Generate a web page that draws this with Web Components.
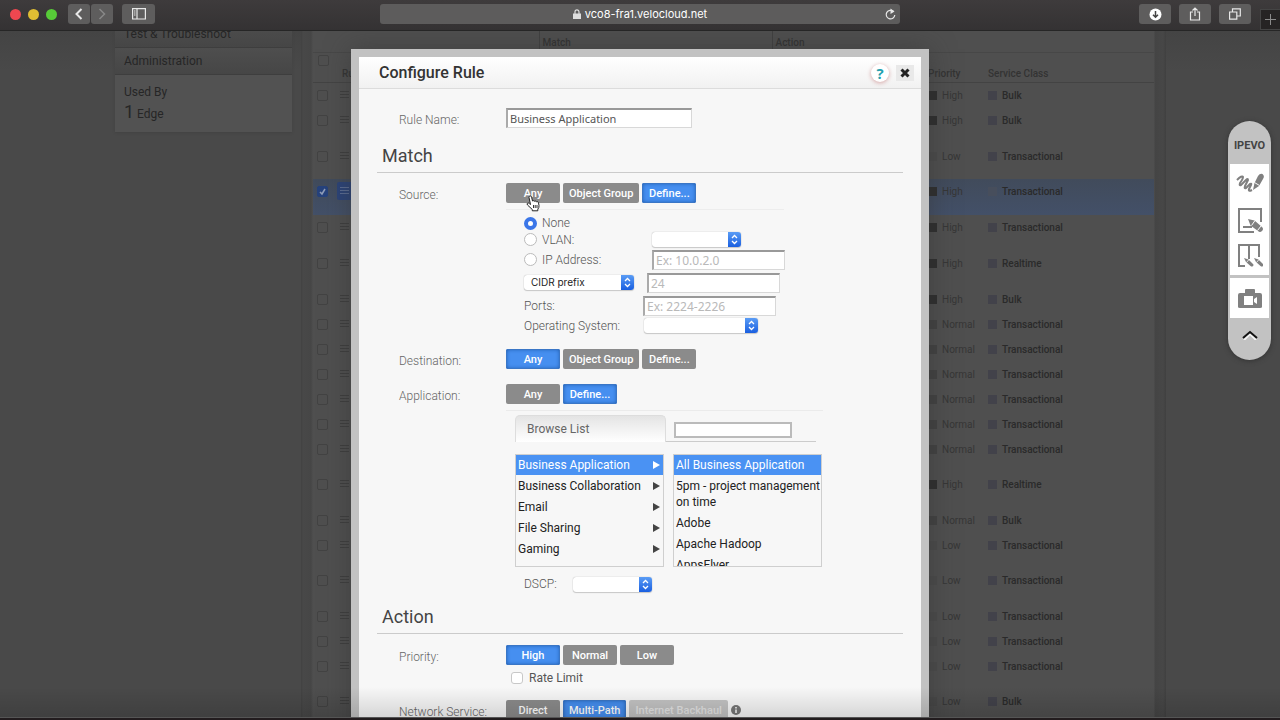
<!DOCTYPE html>
<html lang="en">
<head>
<meta charset="utf-8">
<title>Configure Rule</title>
<style>
html,body{margin:0;height:100%;overflow:hidden;background:#484848;font-family:Roboto,"Liberation Sans",sans-serif}
</style>
</head>
<body>
<app-shell></app-shell>

<template id="t-app-shell">
<style>
:host{display:flex;flex-direction:column;height:100vh;background:#484848}
.stage{flex:1;min-height:0;position:relative;overflow:hidden;background:linear-gradient(#444,#494949 40px)}
.page{max-width:1052px;margin:0 auto;display:flex;align-items:flex-start;gap:9px}
nav-sidebar{flex:0 0 177px;margin-left:1px}
rules-table{flex:1;min-width:0}
.layer{position:absolute;inset:0;display:flex;justify-content:center;align-items:flex-start;padding-top:18px}
.layer::after{content:"";position:absolute;left:0;right:0;bottom:0;height:30px;background:linear-gradient(transparent,#0002);pointer-events:none}
tool-dock{position:absolute;right:9px;top:90px}
.edge{height:3px;background:#221c1e;border-top:1px solid #555;box-sizing:border-box}
</style>
<browser-bar></browser-bar>
<main class="stage">
<div class="page"><nav-sidebar></nav-sidebar><rules-table></rules-table></div>
<div class="layer"><config-dialog></config-dialog></div>
<tool-dock></tool-dock>
</main>
<div class="edge"></div>
</template>

<template id="t-browser-bar">
<style>
:host{display:flex;align-items:flex-start;justify-content:space-between;height:30px;border-bottom:1px solid #262626;background:linear-gradient(#3e3b3c,#343233);position:relative}
.side{display:flex;align-items:flex-start;flex:1}
.right{justify-content:flex-end}
.lights{display:flex;gap:7px;padding:9px 11px 0 10px}
.lights i{width:11px;height:11px;border-radius:50%;background:#ee4750}
.lights i:nth-child(2){background:#dfbd33}.lights i:nth-child(3){background:#57cb38}
button{border:0;padding:0;margin:4px 0 0;height:20px;width:32px;border-radius:3px;background:#5e5d5d;display:grid;place-items:center}
.back,.fwd{width:22px}.fwd{margin-left:1px}.panel{width:33px;margin-left:9px}
.right button{margin-left:8px}
.right button.new{margin:9px 0 0 9px;width:20px;height:21px;background:#262424;border:1px solid #444;border-right:0;border-radius:0;box-sizing:border-box}
.url{margin-top:4px;width:520px;height:20px;border-radius:3px;background:#5d5c5c;display:grid;grid-template-columns:20px 1fr 20px;align-items:center;color:#fff;font:400 11px/20px Inter,Roboto,sans-serif}
.addr{display:flex;justify-content:center;align-items:center;gap:4px}
.url button{margin:0;width:20px;background:none}
svg{display:block;fill:none;stroke:#e8e8e8}
</style>
<div class="side">
<div class="lights"><i></i><i></i><i></i></div>
<button class="back" aria-label="Back"><svg width="8" height="12" stroke-width="2"><path d="M6.500 1 1.500 6l5 5"/></svg></button>
<button class="fwd" aria-label="Forward"><svg width="8" height="12" stroke-width="1.500" style="stroke:#888"><path d="m1.500 1 5 5-5 5"/></svg></button>
<button class="panel" aria-label="Sidebar"><svg width="14" height="12" stroke-width="1.200"><path d="M.6.6h12.800v10.400H.6zM5 .6V11"/><path stroke-width="1" d="M2 3h1.500M2 5h1.500M2 7h1.500"/></svg></button>
</div>
<div class="url"><span></span><span class="addr"><svg width="8" height="10"><path fill="#ddd" stroke="none" d="M0 4.500h8V10H0z"/><path stroke="#ddd" stroke-width="1.200" d="M2 5V3a2 2.200 0 0 1 4 0v2"/></svg>vco8-fra1.velocloud.net</span>
<button aria-label="Reload"><svg width="11" height="12" stroke-width="1.200"><path d="M8.500 3.500A4.300 4.300 0 1 0 9.800 7"/><path fill="#e8e8e8" stroke="none" d="m5.500.5 4 3-4 2.500z"/></svg></button></div>
<div class="side right">
<button aria-label="Downloads"><svg width="13" height="13"><circle cx="6.500" cy="6.500" r="6" fill="#fff" stroke="none"/><path stroke="#444" stroke-width="1.500" d="M6.500 3v6M4 6.700l2.500 2.500L9 6.700"/></svg></button>
<button aria-label="Share"><svg width="12" height="14" stroke-width="1.200"><path d="M4 5H1.500v8h9V5H8M6 9V1M3.500 3.500 6 1l2.500 2.500"/></svg></button>
<button aria-label="Tabs"><svg width="12" height="12" stroke-width="1.200"><path d="M.6 4h7.200v7.200H.6zM3.500 4V.8h7.800V8H8"/></svg></button>
<button class="new" aria-label="New tab"><svg width="11" height="11" style="stroke:#8a8a8a"><path d="M5.500 0v11M0 5.500h11"/></svg></button>
</div>
</template>

<template id="t-nav-sidebar">
<style>
:host{display:block;background:#525252;color:#262626;font-size:12px;height:101px;overflow:hidden;box-shadow:0 1px 2px #424242}
a{display:block;box-sizing:border-box;height:27px;line-height:26px;padding-left:9px;color:inherit;text-decoration:none;background:linear-gradient(#4e4e4e,#464646);border-bottom:1px solid #3e3e3e}
a:first-of-type{margin-top:-10px}
.used{padding:7px 9px;line-height:20px}
p{margin:0}b{font-size:18px;font-weight:400}
</style>
<a href="#test">Test &amp; Troubleshoot</a><a href="#admin">Administration</a>
<div class="used"><p>Used By</p><p><b>1</b> Edge</p></div>
</template>

<template id="t-rules-table">
<style>
:host{display:block;box-sizing:border-box;height:700px;padding:0 12px;background:linear-gradient(90deg,#414141,#484848 2px,#464646 10px,#4f4f4f 12px,#4f4f4f calc(100% - 12px),#444 calc(100% - 11px),#474747 calc(100% - 3px),#404040)}
table{width:100%;table-layout:fixed;border-collapse:collapse;font-size:10px;color:#2a2a2a}
th{font-weight:500;text-align:left;padding:0;color:#333;box-sizing:border-box}
thead tr:first-child{height:21px}
thead tr:first-child th{border-right:1px solid #414141;border-bottom:1px solid #474747;padding:4px 0 0 3px;line-height:14px}
thead tr:first-child th:last-child{border-right:0}
thead tr:last-child{height:30px}
thead tr:last-child th{border-bottom:1px solid #434343;vertical-align:bottom;line-height:16px}
td{padding:0;vertical-align:top;height:var(--h);line-height:25px;white-space:nowrap;overflow:hidden;font-weight:500}
td.p{color:#363636;font-weight:400}
tr.sel{background:linear-gradient(#414b5b,#435068)}
input{appearance:none;width:11px;height:11px;border:1px solid #434343;border-radius:2px;margin:7px 0 0 4px;display:block}
.sel input{background:#26427c url("data:image/svg+xml,%3Csvg xmlns='http://www.w3.org/2000/svg' width='9' height='9'%3E%3Cpath d='m2 5 2 2 3-5' fill='none' stroke='%23909db8' stroke-width='1.500'/%3E%3C/svg%3E");border-color:#26427c}
th input{margin:0 0 16px 5px}
.n{display:inline-block;padding-left:3px}
.n svg{display:block;margin-top:7px;stroke:#3e3e3e}
.sel .n{background:#2b4378;padding:0 18px 5px 3px;margin-top:3px;border-radius:2px;line-height:0}
.sel .n svg{stroke:#5b6d94;margin-top:4px}
.sw{display:inline-block;width:9px;height:9px;margin-right:5px;vertical-align:-1px;background:#42424a}
.High{background:#2e2e2e}.Normal{background:#424242}.Low{background:#4b4b4b}
.sel .sw:not(.High){background:#474e5c}
</style>
<table><colgroup><col style="width:24px"><col style="width:202px"><col style="width:233px"><col style="width:156px"><col style="width:60px"><col></colgroup>
<thead><tr><th colspan="2"></th><th>Match</th><th colspan="3">Action</th></tr>
<tr><th><input type="checkbox" aria-label="Select all rules"></th><th style="padding-left:5px">Rule</th><th></th><th></th><th>Priority</th><th>Service Class</th></tr></thead>
<tbody></tbody></table>
</template>

<template id="t-form-row">
<style>
:host{display:grid;grid-template-columns:107px 1fr;align-items:start;padding-left:22px}
.l{font-size:12px;line-height:24px;color:#666;font-weight:300}
</style>
<div class="l"><slot name="label"></slot></div><div><slot></slot></div>
</template>

<template id="t-seg-button">
<style>
:host{display:inline-flex}
button{border:0;margin:0;box-sizing:border-box;min-width:54px;height:20px;padding:1px 6px 0;border-radius:2px;background:#8b8b8b;color:#fff;font:500 11px/18px Roboto,sans-serif}
:host([on]) button{background:#468ff0;box-shadow:inset 0 0 4px #174f9c;outline:1px solid #3a76c6;outline-offset:-1px}
:host([off]) button{background:#c3c3c3;color:#e4e4e4}
</style>
<button type="button"><slot></slot></button>
</template>

<template id="t-mac-select">
<style>
:host{display:inline-block;position:relative;height:15px;background:#fff;border-radius:3px;box-shadow:0 0 1px #999,0 1px 1px #ccc}
::slotted(select){appearance:none;display:block;width:100%;height:15px;border:0;margin:0;padding:0 16px 0 7px;background:none;font:10px/15px Inter,sans-serif;color:#222}
svg{position:absolute;right:0;top:0;pointer-events:none}
</style>
<slot></slot><svg width="13" height="15"><defs><linearGradient id="g" x2="0" y2="1"><stop stop-color="#5a9cf5"/><stop offset="1" stop-color="#1a5fe0"/></linearGradient></defs><path fill="url(#g)" d="M0 0h10a3 3 0 0 1 3 3v9a3 3 0 0 1-3 3H0z"/><path fill="none" stroke="#fff" stroke-width="1.300" d="m4 6 2.500-2.500L9 6M4 9l2.500 2.500L9 9"/></svg>
</template>

<template id="t-pick-list">
<style>
:host{display:block;box-sizing:border-box;width:149px;height:113px;overflow:hidden;border:1px solid #cfcfcf;font-size:12px;color:#222}
::slotted(button){display:block;box-sizing:border-box;width:100%;border:0;margin:0;padding:3px 0 2px 2px;background:none;text-align:left;font:12px/16px Roboto,sans-serif;color:#222}
::slotted(button[aria-current]){background:#4a92f3;color:#fff;padding:2px 0 2px 2px}
</style><slot></slot>
</template>

<template id="t-config-dialog">
<style>
:host{display:block;box-sizing:border-box;width:578px;height:800px;border:8px solid #c2c2c2;background:#f7f7f7;color:#555;box-shadow:0 0 24px #3338}
header{display:flex;align-items:center;gap:7px;height:31px;padding:0 7px 0 20px;border-bottom:1px solid #dcdcdc;background:linear-gradient(#fff,#f1f1f1)}
h1{flex:1;margin:0;font:500 16px/33px Roboto,sans-serif;color:#333}
header button{border:0;padding:0;width:18px;height:16px;background:#e9e9e9;display:grid;place-items:center}
header button.help{width:18px;height:18px;border-radius:50%;background:#fff;color:#25a0ae;font:700 15px/18px "Open Sans",sans-serif;box-shadow:0 1px 4px #d6a5a5}
form{padding:19px 18px 0}
h2{margin:0;height:32px;border-bottom:1px solid #cbcbcb;padding-left:5px;font:400 18px/30px Roboto,sans-serif;color:#444;box-sizing:border-box}
.segs{display:flex;gap:3px;align-items:center}
input[type=text]{box-sizing:border-box;height:20px;border:1px solid #d8d8d8;border-top:2px solid #999;border-left:2px solid #aaa;background:#fff;padding:0 2px;margin:0;font:12px/16px "Noto Sans",sans-serif;color:#555}
#name{font-size:11px}
input::placeholder{color:#b9b9b9}
input[type=radio]{appearance:none;width:13px;height:13px;margin:0 5px 0 0;border:1px solid #bbb;border-radius:50%;background:#fff}
input[type=radio]:checked{border:4px solid #3b76e8}
input[type=checkbox]{appearance:none;width:12px;height:12px;margin:0 6px 0 0;border:1px solid #c8c8c8;border-radius:3px;background:#fff}
.r{display:flex;align-items:center;font-weight:300;font-size:12px}
.r label{display:flex;align-items:center}
.src{margin-top:6px;border-top:1px solid #ededed;width:278px;padding:5px 0 0 18px;box-sizing:border-box}
.src>.r>:first-child{flex:0 0 auto}
.app{margin-top:6px;border-top:1px solid #ebebeb;width:317px;padding:4px 0 0 9px;box-sizing:border-box}
.tabs{display:flex;height:27px;align-items:stretch;margin-right:7px}
.tab{width:151px;border:1px solid #ddd;border-bottom:0;border-radius:5px 5px 0 0;background:linear-gradient(#e4e4e4,#fff);text-align:left;padding:0 11px;font:12px/26px Roboto,sans-serif;color:#666;box-sizing:border-box}
.find{flex:1;border-bottom:1px solid #ccc;padding:7px 0 0 8px}
.find input[type=text]{display:block;width:118px;height:16px;border:2px solid #bbb}
.lists{display:flex;gap:9px;margin-top:12px}
pick-list i{float:right;width:0;height:0;border:4px solid transparent;border-left:7px solid #444;border-right:0;margin:4px 3px 0 0}
pick-list [aria-current] i{border-left-color:#fff}
.any{position:relative;display:inline-flex}
.any svg{position:absolute;left:20px;top:12px;pointer-events:none}
</style>
<header><h1>Configure Rule</h1><button class="help" aria-label="Help">?</button><button aria-label="Close"><svg width="10" height="10"><path d="m1.500 1.500 7 7m0-7-7 7" stroke="#222" stroke-width="3"/></svg></button></header>
<form>
<form-row style="height:33px"><label slot="label" for="name">Rule Name:</label><input type="text" id="name" value="Business Application" style="width:186px"></form-row>
<h2>Match</h2>
<form-row style="height:166px;padding-top:10px"><span slot="label">Source:</span>
<div class="segs"><span class="any"><seg-button>Any</seg-button><svg width="14" height="17" viewBox="0 0 14 17"><path fill="#fff" stroke="#222" stroke-width="1" stroke-linejoin="round" d="M4.500 9.500 3 2.500Q2.800.8 4.200.8q1 0 1.400 1.400L6.500 6q1.300-.8 2.200.3 1.300-.7 2 .5 1.300-.5 1.800.8l.5 3q.2 2-1.200 3.600v1.600H6.300v-1.300L1.500 10q-1-1.300.2-1.900 1-.4 2 .8z"/><path stroke="#333" d="M7.500 10v3M9.200 10v3M11 10v3"/></svg></span><seg-button>Object Group</seg-button><seg-button on>Define...</seg-button></div>
<div class="src">
<div class="r" style="height:16px"><label><input type="radio" name="s" checked>None</label></div>
<div class="r" style="height:17px"><label style="width:128px" for="vlan"><input type="radio" name="s" aria-label="VLAN">VLAN:</label><mac-select style="width:89px"><select id="vlan"><option></option></select></mac-select></div>
<div class="r" style="height:23px"><label style="width:128px" for="ip"><input type="radio" name="s" aria-label="IP Address">IP Address:</label><input type="text" id="ip" placeholder="Ex: 10.0.2.0" style="width:133px"></div>
<div class="r" style="height:23px"><mac-select style="width:110px;margin-right:13px"><select aria-label="Mask type"><option>CIDR prefix</option></select></mac-select><input type="text" aria-label="Prefix" placeholder="24" style="width:133px"></div>
<div class="r" style="height:23px"><label for="ports" style="width:119px">Ports:</label><input type="text" id="ports" placeholder="Ex: 2224-2226" style="width:133px"></div>
<div class="r" style="height:17px"><label for="os" style="width:120px">Operating System:</label><mac-select style="width:114px"><select id="os"><option></option></select></mac-select></div>
</div></form-row>
<form-row style="height:35px"><span slot="label">Destination:</span><div class="segs"><seg-button on>Any</seg-button><seg-button>Object Group</seg-button><seg-button>Define...</seg-button></div></form-row>
<form-row style="height:218px"><span slot="label">Application:</span><div class="segs"><seg-button>Any</seg-button><seg-button on>Define...</seg-button></div>
<div class="app">
<div class="tabs"><button type="button" class="tab">Browse List</button><div class="find"><input type="text" aria-label="Search applications"></div></div>
<div class="lists">
<pick-list><button type="button" aria-current="true"><i></i>Business Application</button><button type="button"><i></i>Business Collaboration</button><button type="button"><i></i>Email</button><button type="button"><i></i>File Sharing</button><button type="button"><i></i>Gaming</button></pick-list>
<pick-list><button type="button" aria-current="true">All Business Application</button><button type="button">5pm - project management on time</button><button type="button">Adobe</button><button type="button">Apache Hadoop</button><button type="button">AppsFlyer</button></pick-list>
</div>
<div class="r" style="height:34px;padding-left:9px"><label for="dscp" style="width:49px">DSCP:</label><mac-select style="width:79px"><select id="dscp"><option></option></select></mac-select></div>
</div></form-row>
<h2>Action</h2>
<form-row style="height:55px;padding-top:11px"><span slot="label">Priority:</span><div class="segs"><seg-button on>High</seg-button><seg-button>Normal</seg-button><seg-button>Low</seg-button></div>
<div class="r" style="height:26px;padding-left:5px;font-weight:400"><label><input type="checkbox">Rate Limit</label></div></form-row>
<form-row><span slot="label">Network Service:</span><div class="segs"><seg-button>Direct</seg-button><seg-button on>Multi-Path</seg-button><seg-button off>Internet Backhaul</seg-button><svg width="10" height="10"><circle cx="5" cy="5" r="5" fill="#777"/><path stroke="#fff" stroke-width="1.500" d="M5 2v1.500M5 4.500V8"/></svg></div></form-row>
</form>
</template>

<template id="t-tool-dock">
<style>
:host{display:block;box-sizing:border-box;width:43px;padding:0 2px;border-radius:22px;background:#c2c2c2;box-shadow:0 1px 5px #333}
.brand{height:43px;line-height:50px;text-align:center;font-weight:700;font-size:11px;color:#444}
button{display:grid;place-items:center;width:100%;height:36px;border:0;padding:0;margin:0;background:#fff}
button.cam{height:40px;margin-top:3px}
button.up{height:42px;background:none;padding-bottom:8px}
.set{background:#fff;padding:2px 0 1px}
svg{display:block;fill:none;stroke:#808080}
</style>
<div class="brand">IPEVO</div>
<div class="set">
<button aria-label="Annotate"><svg width="28" height="22"><path stroke-width="2" stroke-linejoin="round" d="M1 7q5-5 6-3 0 2-3 6-1 3 1 2l5-5q2-2 2 0l-3 6q-1 3 1 2l4-4q2-1 1 1l-2 4q-1 3 3 1"/><path fill="#808080" stroke="none" d="m17 17 1.500-7L22 3q2-3 4.500-2Q29 3 27 6l-4 7z"/><path stroke="#fff" d="m18.500 9.500 5 3"/></svg></button>
<button aria-label="Whiteboard"><svg width="26" height="26"><path stroke-width="2" d="M24 15V2H2v23h15M6 20h9"/><path fill="#808080" stroke="none" d="m11 12 6.500 1.500L25 20q2 2 0 4-2 2-4 0l-7.500-5.500z"/><path stroke="#fff" d="m14.500 18.500 3.500-5M20.500 23.500l3.500-4.500"/></svg></button>
<button aria-label="Split view"><svg width="26" height="26"><path stroke-width="2" d="M12 16V2M22 14V2H2v21h6"/><path fill="#808080" stroke="none" d="m7 15 4.500 1.500L16 21q1 1 0 2t-2.500 0L9 19zm10 0 4.500 1.500L26 21q1 1 0 2t-2.500 0L19 19z"/><path stroke="#fff" stroke-width=".8" d="m9.500 19.500 2.500-3M19.500 19.500l2.500-3"/></svg></button>
</div>
<button class="cam" aria-label="Camera"><svg width="24" height="21"><path fill="#808080" stroke="none" d="M2 5h5V2q0-1 1-1h8q1 0 1 1v3h5q2 0 2 2v12q0 1-2 1H2q-2 0-2-1V7q0-2 2-2z"/><path fill="#fff" stroke="none" d="M6 8h9v9H6zm13 1v7l-3-2v-3z"/></svg></button>
<button class="up" aria-label="Collapse"><svg width="16" height="10" stroke-width="2"><path stroke="#f4f4f4" d="m2 10 6-6 6 6"/><path stroke="#111" d="m1 8 7-6 7 6"/></svg></button>
</template>

<script>
const define = (name, setup) => customElements.define(name, class extends HTMLElement {
  constructor() {
    super();
    const root = this.attachShadow({mode: 'open'});
    root.append(document.getElementById('t-' + name).content.cloneNode(true));
    if (setup) setup(root);
  }
});
['form-row', 'seg-button', 'mac-select', 'pick-list', 'tool-dock', 'nav-sidebar', 'browser-bar', 'config-dialog'].forEach(n => define(n));

/* priority, service class, row height */
const RULES = [
  ['High', 'Bulk', 25], ['High', 'Bulk', 36], ['Low', 'Transactional', 35], ['High', 'Transactional', 36],
  ['High', 'Transactional', 36], ['High', 'Realtime', 36], ['High', 'Bulk', 25], ['Normal', 'Transactional', 25],
  ['Normal', 'Transactional', 25], ['Normal', 'Transactional', 25], ['Normal', 'Transactional', 25],
  ['Normal', 'Transactional', 25], ['Normal', 'Transactional', 35], ['High', 'Realtime', 36], ['Normal', 'Bulk', 25],
  ['Low', 'Transactional', 35], ['Low', 'Transactional', 36], ['Low', 'Transactional', 25], ['Low', 'Transactional', 25],
  ['Low', 'Transactional', 35], ['Low', 'Bulk', 36]
];
define('rules-table', root => {
  root.querySelector('tbody').innerHTML = RULES.map(([p, s, h], i) => `<tr class="${i === 3 ? 'sel' : ''}" style="--h:${h}px">
<td><input type="checkbox" aria-label="Rule ${i + 1}" ${i === 3 ? 'checked' : ''}></td>
<td><span class="n"><svg width="9" height="9"><path d="M0 1.500h9M0 4.500h9M0 7.500h9"/></svg></span></td><td></td><td></td>
<td class="p"><i class="sw ${p}"></i>${p}</td><td><i class="sw"></i>${s}</td></tr>`).join('');
});
define('app-shell');
</script>
</body>
</html>
